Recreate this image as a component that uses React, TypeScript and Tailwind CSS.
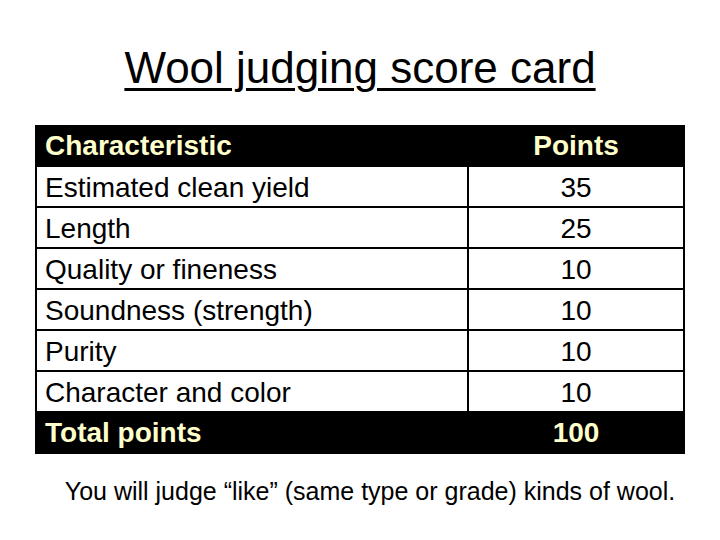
const rows: [string, string][] = [
  ["Estimated clean yield", "35"],
  ["Length", "25"],
  ["Quality or fineness", "10"],
  ["Soundness (strength)", "10"],
  ["Purity", "10"],
  ["Character and color", "10"],
];

export default function App() {
  return (
    <div
      className="w-[720px] h-[540px] bg-white text-black flex flex-col items-center"
      style={{ fontFamily: '"Liberation Sans", Arial, sans-serif' }}
    >
      <h1 className="mt-[46px] text-[44px] leading-[44px] underline decoration-[3px] underline-offset-[5px]">
        Wool judging score card
      </h1>

      <div className="mt-[35px] w-[650px] bg-black">
        <div className="h-[42px] flex items-center text-[#ffffcc] font-bold text-[28px]">
          <div className="w-[432px] pl-[10px]">Characteristic</div>
          <div className="flex-1 text-center">Points</div>
        </div>
        <div className="grid grid-cols-[430px_1fr] gap-[2px] px-[2px]">
          {rows.map(([name, pts]) => (
            <div key={name} className="contents">
              <div className="h-[39px] bg-white flex items-center pl-[8px] text-[28px] pt-[2px]">{name}</div>
              <div className="h-[39px] bg-white flex items-center justify-center text-[28px] pt-[2px]">{pts}</div>
            </div>
          ))}
        </div>
        <div className="h-[43px] flex items-center text-[#ffffcc] font-bold text-[28px]">
          <div className="w-[432px] pl-[10px]">Total points</div>
          <div className="flex-1 text-center">100</div>
        </div>
      </div>

      <p className="mt-[22px] ml-[20px] text-[25px] leading-[30px]">
        You will judge “like” (same type or grade) kinds of wool.
      </p>
    </div>
  );
}
